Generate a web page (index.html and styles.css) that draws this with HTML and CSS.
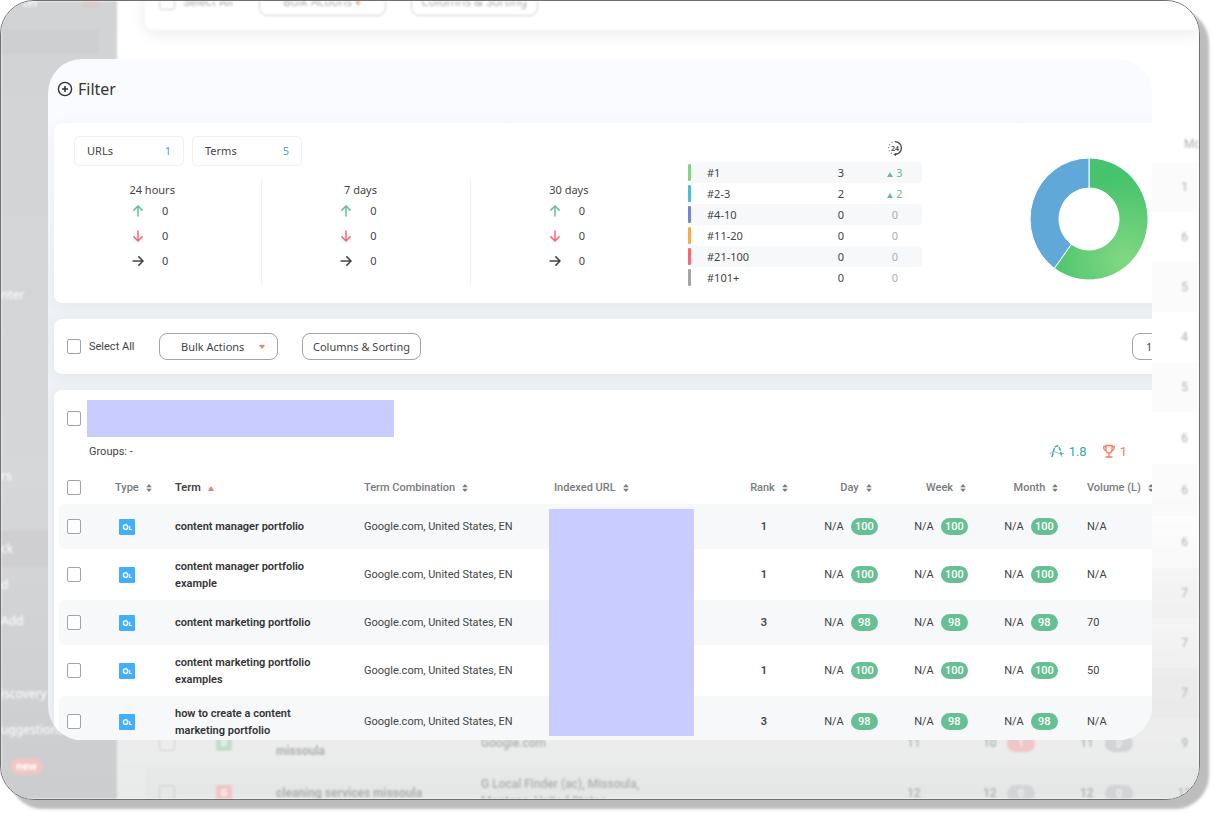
FILE: index.html
```html
<!DOCTYPE html>
<html lang="en">
<head>
<meta charset="utf-8">
<meta name="viewport" content="width=device-width, initial-scale=1">
<title>Rank Tracker</title>
<link rel="stylesheet" href="styles.css">
</head>
<body>
<svg class="defs" width="0" height="0" aria-hidden="true">
  <symbol id="sort" viewBox="0 0 6 10"><path d="M3 1L5.800 4.200H.2zM3 9L.2 5.800h5.600z" fill="currentColor"/></symbol>
  <symbol id="up" viewBox="0 0 12 12"><path d="M6 11.500V1.200M1.400 5.600L6 1l4.600 4.600" fill="none" stroke="currentColor" stroke-width="1.500"/></symbol>
  <symbol id="down" viewBox="0 0 12 12"><path d="M6 .5v10.300M1.400 6.400L6 11l4.600-4.600" fill="none" stroke="currentColor" stroke-width="1.500"/></symbol>
  <symbol id="right" viewBox="0 0 12 12"><path d="M.5 6h10.300M6.400 1.400L11 6l-4.600 4.600" fill="none" stroke="currentColor" stroke-width="1.500"/></symbol>
  <symbol id="tri" viewBox="0 0 6 5"><path d="M3 0l3 5H0z" fill="currentColor"/></symbol>
</svg>

<div class="frame">
  <div class="backdrop" aria-hidden="true">
    <div class="side">
      <div class="side-top"><span>ter</span><i class="burger"></i></div>
      <div class="side-search"></div>
      <ul class="side-nav">
        <li>nter</li><li></li><li></li><li></li><li></li>
        <li class="group">rs</li><li></li><li class="active group">ck</li><li>d</li><li>Add</li><li></li>
        <li class="group">iscovery</li><li>uggestions</li><li><b class="new">new</b></li>
      </ul>
    </div>
    <div class="back-main">
      <div class="back-bar">
        <i class="bbox"></i><span class="b-label">Select All</span>
        <span class="b-btn">Bulk Actions <i class="b-caret">▾</i></span><span class="b-btn">Columns &amp; Sorting</span>
      </div>
      <div class="back-card">
        <div class="brow bhead"><span class="last">Month</span></div>
        <div class="brow alt"><span class="last">1</span></div>
        <div class="brow"><span class="last">6</span></div>
        <div class="brow alt"><span class="last">5</span></div>
        <div class="brow"><span class="last">4</span></div>
        <div class="brow alt"><span class="last">5</span></div>
        <div class="brow tall"><span class="last">6</span></div>
        <div class="brow tall alt"><span class="last">6</span></div>
        <div class="brow tall"><span class="last">6</span></div>
        <div class="brow alt"><span class="last">7</span></div>
        <div class="brow"><span class="last">7</span></div>
        <div class="brow alt"><span class="last">7</span></div>
        <div class="brow">
          <i class="bbox"></i><span class="btype green">D</span><b class="bterm low">missoula</b><span class="bcomb">Google.com</span>
          <span class="bnum">11</span><span class="bnum">10</span><span class="bpill red">1</span><span class="bnum">11</span><span class="bpill">0</span><span class="last">9</span>
        </div>
        <div class="brow alt">
          <i class="bbox"></i><span class="btype red">G</span><b class="bterm">cleaning services missoula</b><span class="bcomb">G Local Finder (ac), Missoula,<br>Montana, United States</span>
          <span class="bnum">12</span><span class="bnum">12</span><span class="bpill">0</span><span class="bnum">12</span><span class="bpill">0</span><span class="last">12</span>
        </div>
      </div>
    </div>
  </div>

  <main class="panel">
    <button class="filter" type="button">
      <svg width="16" height="16" viewBox="0 0 16 16" fill="none" stroke="currentColor" aria-hidden="true"><circle cx="8" cy="8" r="6.600" stroke-width="1.400"/><path d="M8 5v6M5 8h6" stroke-width="1.600"/></svg>
      Filter
    </button>

    <section class="card overview">
      <div class="left">
        <div class="chips">
          <div class="chip"><span>URLs</span><span class="blue">1</span></div>
          <div class="chip"><span>Terms</span><span class="blue">5</span></div>
        </div>
        <div class="trends">
          <div class="trend"><h3>24 hours</h3>
            <p><svg class="ic c-up"><use href="#up"/></svg><span>0</span></p>
            <p><svg class="ic c-down"><use href="#down"/></svg><span>0</span></p>
            <p><svg class="ic"><use href="#right"/></svg><span>0</span></p></div>
          <div class="trend"><h3>7 days</h3>
            <p><svg class="ic c-up"><use href="#up"/></svg><span>0</span></p>
            <p><svg class="ic c-down"><use href="#down"/></svg><span>0</span></p>
            <p><svg class="ic"><use href="#right"/></svg><span>0</span></p></div>
          <div class="trend"><h3>30 days</h3>
            <p><svg class="ic c-up"><use href="#up"/></svg><span>0</span></p>
            <p><svg class="ic c-down"><use href="#down"/></svg><span>0</span></p>
            <p><svg class="ic"><use href="#right"/></svg><span>0</span></p></div>
        </div>
      </div>

      <table class="dist">
        <thead><tr><td class="d-bar"></td><td class="d-name"></td><td class="d-num"></td><th class="d-delta" scope="col">
          <svg class="clock" width="16" height="16" viewBox="0 0 16 16" role="img" aria-label="24 hours">
            <path d="M8 1.600A6.400 6.400 0 0 1 8 14.400" fill="none" stroke="#444" stroke-width="1.300"/>
            <path d="M8 14.400A6.400 6.400 0 0 1 8 1.600" fill="none" stroke="#888" stroke-width="1.200" stroke-dasharray="1.200 2"/>
            <path d="M9.500 12.700L6.500 14.400l2.500 1.600z" fill="#444"/>
            <text x="8" y="10.500" text-anchor="middle">24</text>
          </svg></th></tr></thead>
        <tbody>
          <tr><td class="d-bar"><i class="m1"></i></td><td>#1</td><td>3</td><td class="gain"><svg width="6" height="5"><use href="#tri"/></svg> 3</td></tr>
          <tr><td class="d-bar"><i class="m2"></i></td><td>#2-3</td><td>2</td><td class="gain"><svg width="6" height="5"><use href="#tri"/></svg> 2</td></tr>
          <tr><td class="d-bar"><i class="m3"></i></td><td>#4-10</td><td>0</td><td>0</td></tr>
          <tr><td class="d-bar"><i class="m4"></i></td><td>#11-20</td><td>0</td><td>0</td></tr>
          <tr><td class="d-bar"><i class="m5"></i></td><td>#21-100</td><td>0</td><td>0</td></tr>
          <tr><td class="d-bar"><i class="m6"></i></td><td>#101+</td><td>0</td><td>0</td></tr>
        </tbody>
      </table>

      <div class="chart">
        <svg width="120" height="124" viewBox="-60 -62 120 124" role="img" aria-label="Ranking distribution">
          <defs><radialGradient id="g" gradientUnits="userSpaceOnUse" cx="36" cy="42" r="84"><stop offset="0" stop-color="#82d882"/><stop offset="1" stop-color="#46c36c"/></radialGradient></defs>
          <path d="M0-61A59 61 0 1 1-34.700 49.300L-17.600 25.100A30 31 0 1 0 0-31z" fill="url(#g)" stroke="#fff"/>
          <path d="M0-61A59 61 0 0 0-34.700 49.300L-17.600 25.100A30 31 0 0 1 0-31z" fill="#5fa8d8" stroke="#fff"/>
        </svg>
      </div>
    </section>

    <section class="card toolbar">
      <label class="check"><input type="checkbox"> Select All</label>
      <span class="select bulk">
        <select aria-label="Bulk Actions"><option>Bulk Actions</option></select>
        <svg class="caret" viewBox="0 0 6 4" aria-hidden="true"><path d="M0 0h6L3 4z" fill="#fb7a5c"/></svg>
      </span>
      <button class="outline" type="button">Columns &amp; Sorting</button>
      <span class="select size"><select aria-label="Rows per page"><option>100</option></select></span>
    </section>

    <section class="card results">
      <div class="site"><input type="checkbox" aria-label="Select site"><span class="mask"></span></div>
      <div class="meta">
        <span>Groups: -</span>
        <span class="stats">
          <span class="avg"><svg width="14" height="14" viewBox="0 0 14 14" fill="none" stroke="currentColor" aria-hidden="true"><path d="M2 13C3 9 3.500 7 4 5.500Q5 2 7 2t3 3.500C10.500 7 11 9 12 13" stroke-width="1.500" stroke-dasharray="4 1"/><path d="M0 9.500C3 7.500 4 7.500 7 8.500s4 1 7 1" opacity=".65"/></svg>1.8</span>
          <span class="cup"><svg width="12" height="14" viewBox="0 0 12 14" fill="none" stroke="currentColor" stroke-width="1.300" aria-hidden="true"><path d="M3 1.500h6v4.300Q9 9 6 9T3 5.800zM3 2.500H.8v2Q1 6.500 3.300 6.700M9 2.500h2.200v2Q11 6.500 8.700 6.700M6 9v3.500M2.500 13h7"/></svg>1</span>
        </span>
      </div>
      <div class="grid">
        <table class="terms">
          <colgroup><col class="w-cb"><col class="w-type"><col class="w-term"><col class="w-comb"><col class="w-url"><col class="w-rank"><col class="w-day"><col class="w-day"><col class="w-day"><col></colgroup>
          <thead><tr>
            <th><input type="checkbox" aria-label="Select all terms"></th>
            <th class="type">Type<svg class="sort"><use href="#sort"/></svg></th>
            <th class="on">Term<svg class="asc"><use href="#tri"/></svg></th>
            <th>Term Combination<svg class="sort"><use href="#sort"/></svg></th>
            <th>Indexed URL<svg class="sort"><use href="#sort"/></svg></th>
            <th class="mid">Rank<svg class="sort"><use href="#sort"/></svg></th>
            <th class="mid">Day<svg class="sort"><use href="#sort"/></svg></th>
            <th class="mid">Week<svg class="sort"><use href="#sort"/></svg></th>
            <th class="mid">Month<svg class="sort"><use href="#sort"/></svg></th>
            <th class="vol">Volume (L)<svg class="sort"><use href="#sort"/></svg></th>
          </tr></thead>
          <tbody>
            <tr><td><input type="checkbox" aria-label="Select content manager portfolio"></td><td class="type"><span class="tag">O<small>L</small></span></td><td class="term">content manager portfolio</td><td>Google.com, United States, EN</td><td></td><td class="mid rank">1</td><td class="mid">N/A<span class="pill">100</span></td><td class="mid">N/A<span class="pill">100</span></td><td class="mid">N/A<span class="pill">100</span></td><td class="vol">N/A</td></tr>
            <tr><td><input type="checkbox" aria-label="Select content manager portfolio example"></td><td class="type"><span class="tag">O<small>L</small></span></td><td class="term">content manager portfolio example</td><td>Google.com, United States, EN</td><td></td><td class="mid rank">1</td><td class="mid">N/A<span class="pill">100</span></td><td class="mid">N/A<span class="pill">100</span></td><td class="mid">N/A<span class="pill">100</span></td><td class="vol">N/A</td></tr>
            <tr><td><input type="checkbox" aria-label="Select content marketing portfolio"></td><td class="type"><span class="tag">O<small>L</small></span></td><td class="term">content marketing portfolio</td><td>Google.com, United States, EN</td><td></td><td class="mid rank">3</td><td class="mid">N/A<span class="pill">98</span></td><td class="mid">N/A<span class="pill">98</span></td><td class="mid">N/A<span class="pill">98</span></td><td class="vol">70</td></tr>
            <tr><td><input type="checkbox" aria-label="Select content marketing portfolio examples"></td><td class="type"><span class="tag">O<small>L</small></span></td><td class="term">content marketing portfolio examples</td><td>Google.com, United States, EN</td><td></td><td class="mid rank">1</td><td class="mid">N/A<span class="pill">100</span></td><td class="mid">N/A<span class="pill">100</span></td><td class="mid">N/A<span class="pill">100</span></td><td class="vol">50</td></tr>
            <tr><td><input type="checkbox" aria-label="Select how to create a content marketing portfolio"></td><td class="type"><span class="tag">O<small>L</small></span></td><td class="term">how to create a content marketing portfolio</td><td>Google.com, United States, EN</td><td></td><td class="mid rank">3</td><td class="mid">N/A<span class="pill">98</span></td><td class="mid">N/A<span class="pill">98</span></td><td class="mid">N/A<span class="pill">98</span></td><td class="vol">N/A</td></tr>
          </tbody>
        </table>
        <div class="url-mask"></div>
      </div>
    </section>
  </main>
</div>
</body>
</html>
```
FILE: styles.css
```css
* { box-sizing: border-box; }
body {
  margin: 0;
  height: 100vh;
  padding: 0 14px 14px 0;
  overflow: hidden;
  background: #fff;
  color: #444;
  font: 11px/17px Roboto, "Liberation Sans", sans-serif;
}
i { font-style: normal; }
h3, p, ul { margin: 0; padding: 0; }
button, select { font: 11px/16px "Noto Sans", "Open Sans", sans-serif; color: #444; }
.defs { display: none; }

.frame {
  display: grid;
  grid-template: minmax(0, 1fr) / minmax(0, 1fr);
  height: 100%;
  overflow: hidden;
  border: 1px solid #707070;
  border-radius: 34px;
  box-shadow: 9px 9px 3px #bdbdbd;
}
.backdrop, .panel { grid-area: 1 / 1; overflow: hidden; }

/* Dimmed page behind the panel */
.backdrop {
  display: flex;
  filter: blur(1px);
  color: #adaeaf;
  font-size: 12px;
  user-select: none;
}
.side {
  flex: none;
  width: 116px;
  color: #fff;
  background: linear-gradient(#d1d3d4, #d6d7d8 60%, #cbcdcf);
  font: 12px/18px "Noto Sans", sans-serif;
}
.side-top { display: flex; align-items: start; justify-content: space-between; height: 28px; padding: 0 18px 0 22px; line-height: 4px; }
.burger { width: 16px; height: 5px; border: solid #f1b5aa; border-width: 1px 0; }
.side-search { width: 98px; height: 25px; background: #cecfd1; }
.side-nav { margin-top: 223px; list-style: none; }
.side-nav li { height: 36px; padding: 9px 0; white-space: nowrap; }
.side-nav .group { margin-top: 1px; }
.side-nav .active { background: #cfcfd1; }
.new { display: inline-block; margin-left: 9px; padding: 0 6px; border-radius: 9px; background: #f0c6c6; font-size: 10px; line-height: 17px; }
.back-main { flex: 1; min-width: 0; padding-left: 28px; background: linear-gradient(#fff 62%, #f0f0f0 84%, #e9eaea); }
.back-bar { display: flex; align-items: center; height: 56px; margin-top: -27px; padding-left: 14px; border-radius: 0 0 0 8px; background: #fff; box-shadow: 0 4px 16px #e9ebea; }
.bbox { width: 16px; height: 16px; border: 1px solid #cfcfcf; border-radius: 3px; }
.b-label { margin: 0 26px 0 8px; }
.b-btn { width: 127px; height: 28px; margin-right: 25px; border: 1px solid #cfcfcf; border-radius: 8px; text-align: center; line-height: 26px; font-family: "Noto Sans", sans-serif; }
.b-caret { color: #f3a092; }
.back-card { margin-top: 16px; padding-top: 80px; }
.brow {
  display: grid;
  grid-template-columns: 57px 60px 205px 1fr 76px 32px 65px 33px 65px 29px;
  align-items: center;
  height: 50px;
  padding-left: 14px;
}
.brow.alt { background: rgba(0, 0, 0, .015); }
.brow.tall { height: 52px; }
.brow.bhead { height: 36px; }
.last { grid-column: 10; text-align: center; }
.bhead .last { padding-left: 14px; text-align: left; }
.btype { width: 16px; height: 16px; border-radius: 2px; color: #fff; font: bold 9px/16px Roboto, sans-serif; text-align: center; }
.btype.green { background: #c4dccd; }
.bterm { white-space: nowrap; }
.bterm.low { padding-top: 17px; }
.bcomb { font-weight: 500; white-space: nowrap; }
.bnum { padding-left: 8px; font-weight: 500; }
.bpill { width: 28px; height: 17px; border-radius: 9px; background: #d3d4d6; color: #fff; font-size: 10px; text-align: center; }
.bpill.red, .btype.red { background: #f0c6c6; }

/* Foreground panel */
.panel {
  z-index: 1;
  margin: 58px 47px 59px;
  padding-left: 6px;
  border-radius: 34px;
  background: linear-gradient(#f9fbff, #f9fbff 60px, #eef2f6 260px, #eef2f7);
}
.filter {
  display: flex;
  align-items: center;
  gap: 5px;
  height: 60px;
  margin-bottom: 4px;
  padding: 0 3px;
  border: 0;
  background: none;
  font-size: 16px;
  color: #333;
}
.card {
  margin: 0 -104px 16px 0;
  border-radius: 8px;
  background: #fff;
  box-shadow: 0 3px 14px rgba(60, 70, 100, .06);
}

.overview { display: flex; height: 180px; font: 11px/16px "Noto Sans", "Open Sans", sans-serif; }
.left { width: 633px; padding-top: 13px; }
.chips { display: flex; gap: 8px; padding-left: 20px; }
.chip { display: flex; justify-content: space-between; width: 110px; padding: 6px 12px; border: 1px solid #f1f1f1; border-radius: 5px; }
.blue { color: #4aa0f5; }
.trends { display: flex; width: 624px; margin-top: 13px; }
.trend { flex: 1; height: 106px; padding: 3px 11px 0 0; border-right: 1px solid #f1f1f1; text-align: center; }
.trend:last-child { border-right: 0; }
.trend h3 { font: inherit; }
.trend p { display: flex; align-items: center; justify-content: center; gap: 18px; height: 25px; padding-right: 4px; }
.ic { width: 12px; height: 12px; }
.c-up { color: #67c093; }
.c-down { color: #ff6576; }

.dist { width: 235px; height: 0; margin-top: 10px; border-collapse: collapse; table-layout: fixed; }
.dist td, .dist th { height: 21px; padding: 0; text-align: center; }
.dist thead td, .dist thead th { height: 29px; }
.dist .d-bar { width: 4px; text-align: left; background: none; }
.dist .d-name { width: 123px; }
.dist .d-num { width: 54px; }
.d-bar i { display: block; width: 3px; height: 17px; margin-left: 1px; border-radius: 1px; }
.dist tbody td:nth-child(2) { padding-left: 16px; text-align: left; }
.dist tbody td:last-child { border-radius: 0 4px 4px 0; color: #a9afb3; }
.dist tbody tr:nth-child(odd) td:not(.d-bar) { background: #f7f8fa; }
.dist tbody td.gain { color: #67c093; }
.clock { display: block; margin: 0 auto; }
.clock text { font: bold 7px "Noto Sans", sans-serif; fill: #555; }
.m1 { background: #7fd87d; }
.m2 { background: #45c1d3; }
.m3 { background: #6f86dc; }
.m4 { background: #ffab45; }
.m5 { background: #ff6270; }
.m6 { background: #a3a6a9; }
.chart { flex: 1; display: flex; justify-content: center; padding-top: 34px; }

input[type="checkbox"] {
  flex: none;
  display: block;
  appearance: none;
  width: 14px;
  height: 15px;
  margin: 0;
  border: 1px solid #a3a3a7;
  border-radius: 2px;
  background: #fff;
}
.toolbar { display: flex; align-items: center; height: 55px; padding: 0 20px 0 13px; }
.check { display: flex; align-items: center; gap: 8px; width: 92px; }
.select { position: relative; display: flex; height: 27px; }
.select select { width: 100%; padding: 0 0 0 13px; appearance: none; border: 1px solid #a3a3a3; border-radius: 8px; background: #fff; }
.bulk { width: 119px; margin-right: 24px; }
.bulk select { padding-left: 21px; }
.caret { position: absolute; right: 13px; top: 12px; width: 6px; height: 4px; pointer-events: none; }
.outline { width: 119px; height: 27px; padding: 0; border: 1px solid #a3a3a3; border-radius: 8px; background: #fff; }
.size { width: 104px; margin-left: auto; }

.results { padding: 10px 0 20px 5px; }
.site { display: flex; align-items: center; gap: 6px; padding-left: 8px; }
.mask { width: 307px; height: 37px; background: #c9ccfe; }
.meta { display: flex; align-items: center; justify-content: space-between; height: 28px; margin-bottom: 5px; padding: 0 129px 0 30px; }
.stats { display: flex; gap: 16px; font-size: 13px; }
.stats > span { display: flex; align-items: center; gap: 5px; }
.avg { color: #42a2ba; }
.cup { color: #fb7a5c; }
.grid { position: relative; }
.terms { width: 100%; table-layout: fixed; border-collapse: collapse; }
.terms th, .terms td { padding: 0 0 0 10px; text-align: left; vertical-align: middle; }
.terms th { height: 34px; color: #787b7e; font-weight: 500; white-space: nowrap; }
.terms th:first-child, .terms td:first-child { padding-left: 8px; }
.terms td { height: 45px; }
.terms tr:nth-child(even) td, .terms tr:last-child td { height: 51px; }
.terms tbody tr:nth-child(odd) td { background: #f6f8fa; }
.terms td:first-child { border-radius: 6px 0 0 6px; }
.terms th.on { color: #444; font-weight: 600; }
.terms .term { padding-right: 40px; color: #333; font-weight: 600; }
.terms th.mid { text-align: center; }
.terms td.mid { padding-left: 0; text-align: center; }
.terms th.type { padding-left: 13px; }
.terms td.type { padding-left: 17px; }
.terms .vol { padding-left: 11px; }
.rank { font-weight: 600; }
.sort { width: 6px; height: 10px; margin-left: 7px; vertical-align: -2px; }
.asc { width: 6px; height: 5px; margin-left: 7px; color: #fb7a5c; }
.w-cb { width: 43px; }
.w-type { width: 63px; }
.w-term { width: 189px; }
.w-comb { width: 190px; }
.w-url { width: 178px; }
.w-rank { width: 84px; }
.w-day { width: 90px; }
.tag { display: block; width: 16px; height: 16px; border-radius: 1px; background: #42aefc; color: #fff; font: bold 8px/16px "Noto Sans", sans-serif; text-align: center; }
.tag small { font-size: 6px; }
.pill { display: inline-block; width: 27px; height: 17px; margin-left: 7px; border-radius: 9px; background: #67c093; color: #fff; font-weight: 500; }
.url-mask { position: absolute; left: 490px; top: 39px; width: 145px; height: 227px; background: #c9ccfe; }
```
